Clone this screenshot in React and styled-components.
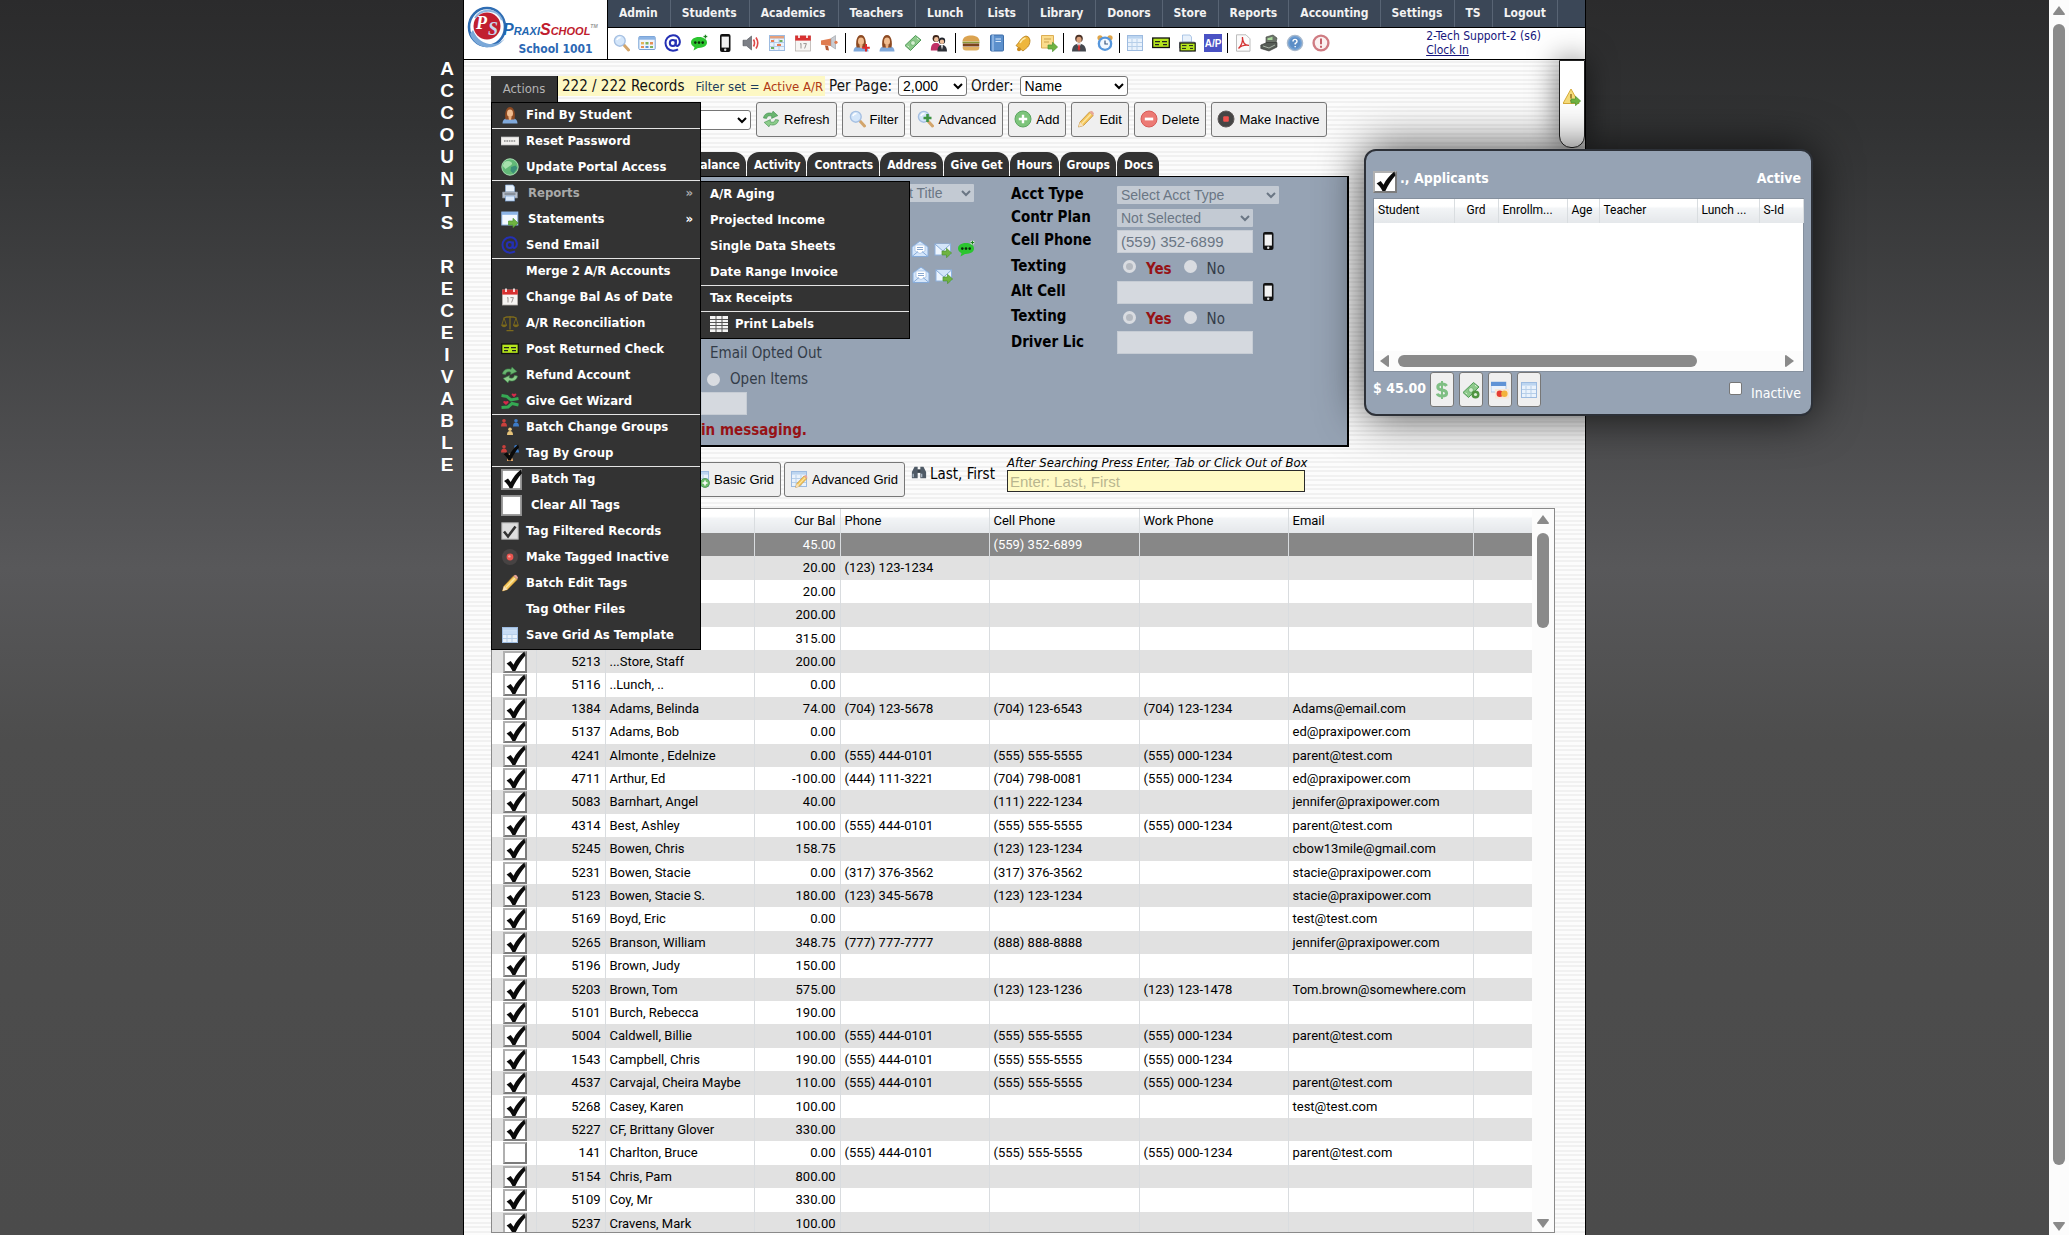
import React from "react";
import styled, { createGlobalStyle, css } from "styled-components";

const uiFont = '"DejaVu Sans Condensed", "DejaVu Sans", sans-serif';
const gridFont = 'Roboto, "DejaVu Sans Condensed", sans-serif';
const controlFont = '"Liberation Sans", Arial, sans-serif';

const GlobalStyle = createGlobalStyle`
  * {
    box-sizing: border-box;
  }
  body {
    margin: 0;
    font-family: ${uiFont};
    background: #4c4c4c;
  }
  ul {
    list-style: none;
    margin: 0;
    padding: 0;
  }
  button, input, select {
    font-family: ${controlFont};
    margin: 0;
  }
`;

/* ---------- icons ---------- */

const Tick = () => (
  <path d="M2.6 10.2 L6 8.2 L8.3 11.2 C10.3 7.2 13.3 3.4 17.2 .4 L18 3.6 C14.8 7.2 12 11.6 9.8 16.4 L7.4 16.4 C6.2 13.8 4.6 11.8 2.6 10.2Z" fill="#0a0a0a" />
);

const Lens = ({ x = 0 }) => (
  <g transform={`translate(${x} 0)`}>
    <path d="M10.5 10.5 L15.5 16" stroke="#d3a56b" strokeWidth="3" strokeLinecap="round" />
    <circle cx="6.8" cy="6.8" r="5.4" fill="#d4e6fa" stroke="#a6c0e2" strokeWidth="1.4" />
    <path d="M3.8 6 Q5 3.6 7.5 3.6" stroke="#fff" strokeWidth="1.5" fill="none" />
  </g>
);

const Sheet = () => (
  <>
    <rect x="1.5" y="1.5" width="15" height="15" fill="#e9f2fc" stroke="#9dbbe0" />
    <rect x="2" y="2" width="14" height="2.6" fill="#bcd5f0" />
    <path d="M2 8.5H16M2 12.5H16M6 5V16M11 5V16" stroke="#b7cfe9" />
  </>
);

const Arrow = ({ x = 8, y = 8 }) => (
  <path transform={`translate(${x} ${y})`} d="M0 3 H4.5 V0.3 L9.6 5 L4.5 9.7 V7 H0Z" fill="#6fb341" stroke="#4f9434" strokeWidth=".7" />
);

const PersonShape = () => (
  <>
    <path d="M1.5 17.5 C1.5 13 5 12 9 12 S16.5 13 16.5 17.5Z" fill="#7fa8da" />
    <path d="M4.6 13.5 C3.4 9 4.4 1 9 1 S14.6 9 13.4 13.5Z" fill="#8d4a22" />
    <ellipse cx="9" cy="7.2" rx="3" ry="3.8" fill="#f1bd90" />
    <path d="M7.4 11 H10.6 L10 14 H8Z" fill="#e9ae80" />
  </>
);

const Bill = () => (
  <>
    <path d="M1 11.5 L11.5 1.5 L17 6 L6.5 16.5Z" fill="#8cc98a" stroke="#4f9a57" />
    <circle cx="9" cy="9" r="2.4" fill="#d5efd0" stroke="#5ba661" strokeWidth=".7" />
    <path d="M3.5 11.7 L5 13.2 M13 4.2 L14.6 5.6" stroke="#e4f5e0" />
  </>
);

const Cheque = () => (
  <>
    <rect x=".7" y="4" width="16.6" height="9.5" fill="#b5e61d" stroke="#111" strokeWidth="1.3" />
    <path d="M3 7.6H8M3 10.6H7M10 7.6H15M11 10.6H15" stroke="#222" strokeWidth="1.1" />
  </>
);

const Recycle = () => (
  <>
    <path d="M1.5 8 C2 4 6 2 10 3.4 L11 1.2 L15.8 5.6 L9.6 8.4 L9.8 6.2 C7 5.2 5 6 4.6 8.4Z" fill="#69b56f" stroke="#3d8c4c" strokeWidth=".6" />
    <path d="M16.5 10 C16 14 12 16 8 14.6 L7 16.8 L2.2 12.4 L8.4 9.6 L8.2 11.8 C11 12.8 13 12 13.4 9.6Z" fill="#8ccc8a" stroke="#3d8c4c" strokeWidth=".6" />
  </>
);

const PrinterShape = () => (
  <>
    <path d="M5 1 H12 L13.5 3 V8 H4.5 V1Z" fill="#e8f1fb" stroke="#8fb2dc" strokeWidth=".7" />
    <path d="M1.5 8 H16.5 V14 H1.5Z" fill="#b8bec8" stroke="#7d8794" strokeWidth=".7" />
    <rect x="4.5" y="12" width="9" height="5" fill="#dbe9fa" stroke="#7fa6d8" strokeWidth=".7" />
    <path d="M3.5 10 H14.5" stroke="#59636f" />
  </>
);

const Pencil = () => (
  <>
    <path d="M1.5 17 L3 12 L12.5 2 L16.2 5.5 L6.5 15.5Z" fill="#f4c55b" stroke="#b98226" strokeWidth=".7" />
    <path d="M12.5 2 L14 .8 Q16 .8 17 3.4 L16.2 5.5Z" fill="#e8a69a" />
    <path d="M1.5 17 L3 12 L6.5 15.5Z" fill="#f7e1bd" />
    <path d="M5 13.5 L14 4" stroke="#fbe6a2" strokeWidth="1.4" />
  </>
);

const Pawn = ({ x, y, color }) => (
  <g transform={`translate(${x} ${y})`} fill={color}>
    <circle cx="3" cy="1.8" r="1.8" />
    <path d="M0 7.5 C0 4.5 1.5 3.6 3 3.6 S6 4.5 6 7.5Z" />
  </g>
);

const CalendarShape = () => (
  <>
    <rect x="1.5" y="2" width="15" height="15" fill="#f7f5f3" stroke="#b9b4b0" strokeWidth=".8" />
    <rect x="1.2" y="1.6" width="15.6" height="5" fill="#d83030" />
    <path d="M5 .5V4M13 .5V4" stroke="#fff" strokeWidth="1.6" />
    <path d="M6 10.2 L7 9.4V14.5 M9.4 9.6H12.4L10.6 14.5" fill="none" stroke="#9a9492" />
  </>
);

const Envelope = () => (
  <>
    <rect x="1" y="4" width="15.5" height="11" fill="#edf5fe" stroke="#8db2e0" />
    <path d="M1 4 L8.8 11 L16.5 4" fill="#d3e5f9" stroke="#86abd9" />
  </>
);

const drawings = {
  search: <Lens x={1} />,
  cards: (
    <>
      <rect x=".8" y="2.5" width="16.4" height="13" rx="1" fill="#eef5fd" stroke="#76a0d4" />
      <rect x="1" y="2.7" width="16" height="3" fill="#8db4e4" />
      <path d="M3 8h3v2.4H3z" fill="#e2b458" />
      <path d="M7.5 8h3v2.4h-3zM12 12h3v2h-3z" fill="#7fb35b" />
      <path d="M12 8h3v2.4h-3zM3 12h3v2H3z" fill="#e58f55" />
      <path d="M7.5 12h3v2h-3z" fill="#5f93d3" />
    </>
  ),
  at: (
    <g fill="none" stroke="#2430b4" strokeWidth="2">
      <circle cx="8.8" cy="9" r="3" />
      <path d="M12 5.5 L11.6 10.4 Q12 12.4 13.8 11.8 C17.5 9.5 16 1.2 9 1.3 C-1 1.8 -1 16.5 9 16.7 Q12 16.7 14 15.4" />
    </g>
  ),
  chat: (
    <>
      <path d="M9 3 C4 3 1 5.4 1 8.6 C1 10.8 2.5 12.4 4.5 13.2 L3.5 16.5 L8 14 C13 14.2 17 12.2 17 8.6 C17 5.4 14 3 9 3Z" fill="#2bc52f" />
      <circle cx="5.3" cy="8.6" r="1.3" fill="#0b2c0b" />
      <circle cx="9" cy="8.6" r="1.3" fill="#0b2c0b" />
      <circle cx="12.7" cy="8.6" r="1.3" fill="#0b2c0b" />
      <circle cx="15.4" cy="2.6" r="2.2" fill="#d8f0d8" />
      <path d="M15.4 .8V4.4M13.6 2.6H17.2" stroke="#157a18" />
    </>
  ),
  phone: (
    <>
      <rect x="4" y="0" width="10.5" height="18" rx="2" fill="#111" />
      <rect x="5.6" y="2.6" width="7.3" height="11" fill="#f2f2f2" />
      <circle cx="9.2" cy="15.8" r="1.2" fill="#ddd" />
    </>
  ),
  speaker: (
    <>
      <path d="M1 6.2 H4.5 L9.5 2 V16 L4.5 11.8 H1Z" fill="#7c7f86" stroke="#4e5157" strokeWidth=".6" />
      <path d="M11.5 5.5 Q13.5 9 11.5 12.5 M14 3.5 Q17.5 9 14 14.5" fill="none" stroke="#dd4646" strokeWidth="1.6" />
    </>
  ),
  schedule: (
    <>
      <Sheet />
      <path d="M3 6h3v2H3zM9 10h4v2H9z" fill="#e77a52" />
      <path d="M11.5 6h3v2h-3zM3 13h3v2H3z" fill="#6cae5f" />
      <rect x="2" y="2" width="14" height="2.4" fill="#e5a07c" />
    </>
  ),
  calendar: <CalendarShape />,
  megaphone: (
    <>
      <path d="M1 6.5 L11 4.5 V12 L1 10.8Z" fill="#e07c50" />
      <path d="M11 4.5 L15.5 1.5 V15 L11 12Z" fill="#c9ccd2" stroke="#8d9097" strokeWidth=".5" />
      <path d="M5 11.5 L8 12 L9 16.5 L6 16Z" fill="#b45a36" />
      <circle cx="16" cy="8.3" r="1.6" fill="#e07c50" />
    </>
  ),
  personAdd: (
    <>
      <PersonShape />
      <path d="M14 10V17.6M10.2 13.8H17.8" stroke="#dd2a2a" strokeWidth="2" />
    </>
  ),
  person: <PersonShape />,
  money: <Bill />,
  couple: (
    <>
      <circle cx="6" cy="4.4" r="3.4" fill="#3c2418" />
      <circle cx="6.3" cy="5.4" r="2.3" fill="#efc09c" />
      <path d="M.8 16.5 C.8 10.5 3 9 6 9 S10.5 10.5 10.5 16.5Z" fill="#c03066" />
      <circle cx="12" cy="6.8" r="3.2" fill="#20242c" />
      <circle cx="12" cy="7.8" r="2.2" fill="#efc09c" />
      <path d="M7.4 17.6 C7.4 12.5 9.5 11 12 11 S17 12.5 17 17.6Z" fill="#2e3138" />
      <path d="M11 11.3h2l-1 4.5z" fill="#fff" />
    </>
  ),
  burger: (
    <>
      <path d="M.5 7.5 C.5 3 5 1.5 9 1.5 S17.5 3 17.5 7.5Z" fill="#dba350" />
      <path d="M.5 8.5 H17.5" stroke="#8a9a3a" strokeWidth="1.6" />
      <rect x=".8" y="9.5" width="16.4" height="3" fill="#7c431c" />
      <path d="M.6 13 H17.4 Q17.4 16.6 14 16.6 H4 Q.6 16.6 .6 13Z" fill="#e0b061" />
    </>
  ),
  book: (
    <>
      <rect x="2.5" y="1" width="13" height="16" rx="1" fill="#5c90cc" stroke="#3d6da8" />
      <path d="M5 1V17" stroke="#9dc1ea" strokeWidth="1.4" />
      <path d="M7.5 5H13M7.5 7.5H13" stroke="#d8e8fa" />
    </>
  ),
  bell: (
    <>
      <path d="M12 2 C6 4 6 8 2 11.5 L9 17 C12 14 16 13 16 6 Q15 2 12 2Z" fill="#eeb63c" stroke="#b27a16" strokeWidth=".8" />
      <path d="M6 9 Q8 5 11.5 4" stroke="#fdeaa8" strokeWidth="1.5" fill="none" />
      <circle cx="5" cy="15.2" r="2" fill="#c98b20" />
    </>
  ),
  noteArrow: (
    <>
      <path d="M1.5 1.5 H13.5 V10 L9.5 14 H1.5Z" fill="#fbdc8c" stroke="#dcae54" />
      <path d="M4 5H11M4 8H9" stroke="#caa04a" />
      <Arrow />
    </>
  ),
  suit: (
    <>
      <circle cx="9" cy="4.6" r="3.8" fill="#4a3126" />
      <ellipse cx="9" cy="5.8" rx="2.6" ry="3" fill="#d9a07c" />
      <path d="M2 17.5 C2 12 5 9.8 9 9.8 S16 12 16 17.5Z" fill="#45484f" />
      <path d="M7 9.8 H11 L9 14Z" fill="#fff" />
      <path d="M8.4 10.5H9.6L10.3 15L9 17L7.7 15Z" fill="#d22c2c" />
    </>
  ),
  clock: (
    <>
      <circle cx="4" cy="3.8" r="2.6" fill="#e0a549" />
      <circle cx="14" cy="3.8" r="2.6" fill="#e0a549" />
      <circle cx="9" cy="9.7" r="7.3" fill="#5596dc" />
      <circle cx="9" cy="9.7" r="5" fill="#f2f8fe" />
      <path d="M9 6.5V10H12" fill="none" stroke="#39577e" strokeWidth="1.2" />
    </>
  ),
  table: <Sheet />,
  cheque: <Cheque />,
  printCheque: (
    <>
      <PrinterShape />
      <rect x="2" y="9" width="15.2" height="8" fill="#b5e61d" stroke="#111" strokeWidth="1.2" />
      <path d="M4 11.6H8.5M4 14.4H8M11 11.6H15M12 14.4H15" stroke="#222" />
    </>
  ),
  payable: (
    <>
      <rect width="18" height="18" fill="#4a52c4" />
      <text x="9" y="12.6" textAnchor="middle" fontFamily="Liberation Sans, sans-serif" fontWeight="700" fontSize="10" fill="#fff">A/P</text>
    </>
  ),
  pdf: (
    <>
      <path d="M2.5 .8 H12 L16 4.8 V17.2 H2.5Z" fill="#fbfbfb" stroke="#bcbcbc" />
      <path d="M4.5 14.5 C8 11 9 7 8.4 3 C8.6 8 11 11.5 15 11.4 C11 10.8 7 11.8 4.5 14.5Z" fill="none" stroke="#d43131" strokeWidth="1.3" />
    </>
  ),
  register: (
    <>
      <path d="M6 3 L13 1 L17 4 L16 9 L6 9Z" fill="#6b7369" stroke="#3f453e" strokeWidth=".6" />
      <path d="M7.5 4.3 L12.5 2.8 V6 H7.5Z" fill="#a8d79b" />
      <path d="M.8 11 L7 8.5 H17 V13 L9 17 L.8 14.5Z" fill="#565c56" stroke="#333" strokeWidth=".6" />
      <path d="M3 12 L9 14 L15 11" stroke="#aab3a8" fill="none" />
    </>
  ),
  help: (
    <>
      <circle cx="9" cy="9" r="7.6" fill="#6f9fd4" stroke="#a9b9cc" strokeWidth="1.4" />
      <circle cx="9" cy="9" r="5.4" fill="#5c8dc6" />
      <path d="M7 7.4 Q7 5.4 9 5.4 T11 7.4 Q11 8.6 9.2 9.4 V10.6 M9.2 12V13.2" stroke="#fff" strokeWidth="1.4" fill="none" />
    </>
  ),
  alert: (
    <>
      <circle cx="9" cy="9" r="7.4" fill="#fbf1f1" stroke="#cf7b82" strokeWidth="2.4" />
      <path d="M9 4.4V10.2M9 11.8V13.8" stroke="#c5616a" strokeWidth="2" />
    </>
  ),
  refresh: <Recycle />,
  advanced: (
    <>
      <Lens x={1} />
      <path d="M11.5 4V12M7.5 8H15.5" stroke="#3e9444" strokeWidth="2.6" />
    </>
  ),
  add: (
    <>
      <circle cx="9" cy="9" r="8" fill="#7cc47a" stroke="#5ca561" />
      <path d="M9 4.8V13.2M4.8 9H13.2" stroke="#fff" strokeWidth="2.4" />
    </>
  ),
  pencil: <Pencil />,
  remove: (
    <>
      <circle cx="9" cy="9" r="8" fill="#ec7a74" stroke="#d75b58" />
      <path d="M4.8 9H13.2" stroke="#fff" strokeWidth="2.8" />
    </>
  ),
  inactive: (
    <>
      <circle cx="9" cy="9" r="8" fill="#454545" stroke="#5f5a5a" />
      <rect x="6.2" y="6.2" width="5.6" height="5.6" rx="1" fill="#f0504c" />
    </>
  ),
  recordDot: (
    <>
      <circle cx="9" cy="9" r="8" fill="#474343" />
      <circle cx="9" cy="9" r="3.4" fill="#e8544e" />
      <circle cx="8.4" cy="8.4" r="1.2" fill="#f8a19b" />
    </>
  ),
  password: (
    <>
      <rect x="0" y="5" width="18" height="8" fill="#f2f0ee" stroke="#bbb" strokeWidth=".7" />
      <path d="M3 9H15" stroke="#8c8c8c" strokeWidth="1.6" strokeDasharray="1.6 .8" />
    </>
  ),
  globe: (
    <>
      <circle cx="9" cy="9" r="8.4" fill="#62b877" />
      <path d="M3 4.5 Q7 2 10 4 T8 8.5 L4.5 11 L1.8 8Z" fill="#a6e0ac" />
      <path d="M10 9 L14.5 7.5 L16.5 10 L12.5 15.5 L9.5 13Z" fill="#3b8f78" />
      <circle cx="9" cy="9" r="8.2" fill="none" stroke="#b8e2be" strokeWidth=".8" />
    </>
  ),
  printer: <PrinterShape />,
  statement: (
    <>
      <rect x=".8" y="2" width="16" height="13" fill="#f4f9ff" stroke="#8db2e0" />
      <rect x="1" y="2" width="15.6" height="2.8" fill="#8cb4e6" />
      <Arrow x={7.5} />
    </>
  ),
  scales: (
    <g fill="none" stroke="#7c6a1c" strokeWidth="1.3">
      <path d="M9 2V15.5M2.5 4 Q9 1.5 15.5 4M5.5 16.6H12.5" />
      <path d="M3 4 L.8 11 H5.4Z M15 4 L12.6 11 H17.2Z" strokeWidth=".9" />
      <path d="M.6 11 Q3 14 5.6 11M12.4 11 Q15 14 17.4 11" fill="#7c6a1c" />
    </g>
  ),
  give: (
    <>
      <path d="M.5 3.5 L6 4.5 L10 8 L17.5 6.5 M.5 15.5 L7 15 L11 11.5 L17.5 13" fill="none" stroke="#35a853" strokeWidth="3" />
      <path d="M13 5.2 L10.6 2.8 Q10.6 .8 13 1.9 Q15.4 .8 15.4 2.8Z M5 13 L2.2 10.4 Q2.2 8.4 5 9.4 Q7.6 8.4 7.6 10.4Z" fill="#d6294a" />
    </>
  ),
  groups: (
    <>
      <Pawn x={0} y={1} color="#c9403c" />
      <Pawn x={12} y={1} color="#3d7bc6" />
      <Pawn x={6} y={9.5} color="#e6c379" />
    </>
  ),
  tagGroups: (
    <>
      <Pawn x={0} y={1} color="#c9403c" />
      <Pawn x={12} y={1} color="#3d7bc6" />
      <Pawn x={6} y={9.5} color="#e6a96a" />
      <Tick />
    </>
  ),
  boxTick: (
    <>
      <rect x=".8" y=".8" width="16.4" height="16.4" fill="#fff" stroke="#8f8f8f" strokeWidth="1.6" />
      <Tick />
    </>
  ),
  boxEmpty: <rect x=".8" y=".8" width="16.4" height="16.4" fill="#fff" stroke="#8f8f8f" strokeWidth="1.6" />,
  boxSoft: (
    <>
      <rect x=".8" y=".8" width="16.4" height="16.4" fill="#dedede" stroke="#a9a9a9" strokeWidth="1" />
      <path d="M3 9.5 L7 14.5 L14.5 4.5" fill="none" stroke="#333" strokeWidth="2.6" />
    </>
  ),
  template: (
    <>
      <Sheet />
      <path d="M2 5H16V8H2Z" fill="#c7dcf5" />
    </>
  ),
  labels: (
    <>
      <rect x="0" y="1" width="18" height="16" fill="#f4f4f4" />
      <path d="M0 4.5H18M0 7.5H18M0 10.5H18M0 13.8H18M6 1V17M12 1V17" stroke="#555" />
    </>
  ),
  mailOpen: (
    <>
      <path d="M1 7 L9 1 L17 7 V16.5 H1Z" fill="#d5e6fa" stroke="#86abd9" />
      <path d="M4 5H14V11L9 13.5L4 11Z" fill="#fff" stroke="#9dbce2" strokeWidth=".7" />
      <path d="M6 7.5H12M6 9.5H12" stroke="#8aa9d0" />
      <path d="M1 16.5 L7 11.5 M17 16.5 L11 11.5" stroke="#86abd9" />
    </>
  ),
  mailSend: (
    <>
      <Envelope />
      <Arrow />
    </>
  ),
  gridAdd: (
    <>
      <Sheet />
      <circle cx="13" cy="13" r="4.5" fill="#6cbb6a" stroke="#3f8a45" strokeWidth=".7" />
      <path d="M13 10.5V15.5M10.5 13H15.5" stroke="#fff" strokeWidth="1.5" />
    </>
  ),
  gridEdit: (
    <>
      <Sheet />
      <g transform="translate(4.5 4.5) scale(.76)">
        <Pencil />
      </g>
    </>
  ),
  binoculars: (
    <>
      <path d="M1 16 V9 L4 3 H7.5 V16Z M10.5 3 H14 L17 9 V16 H10.5Z" fill="#4f5a66" />
      <rect x="7" y="6" width="4" height="4" fill="#39424c" />
      <path d="M2.5 11V15M12 11V15" stroke="#a7b4c2" strokeWidth="1.5" />
    </>
  ),
  dollar: (
    <g fill="none" stroke="#7fbf84">
      <path d="M13.5 5 Q12.5 3 9 3 Q4.8 3 4.8 6 Q4.8 8.4 9 9 Q13.6 9.6 13.6 12.2 Q13.6 15 9 15 Q5 15 4.3 12.6" strokeWidth="3" />
      <path d="M9 0V18" strokeWidth="2" />
    </g>
  ),
  moneyAdd: (
    <>
      <Bill />
      <circle cx="13.5" cy="13.5" r="4" fill="#4f9440" />
      <circle cx="13.5" cy="13.5" r="1.6" fill="#dcefd6" />
    </>
  ),
  card: (
    <>
      <rect x="0" y="1" width="15" height="10" fill="#eaf2fc" stroke="#9ab9e0" strokeWidth=".7" />
      <path d="M0 1H15V5H0Z" fill="#5f93d6" />
      <rect x="4" y="8" width="14" height="9.5" fill="#f7e8d8" />
      <circle cx="8.8" cy="12.8" r="3.2" fill="#e43c34" />
      <circle cx="13.4" cy="12.8" r="3.2" fill="#f3b33c" />
    </>
  ),
  warning: (
    <>
      <path d="M8 1 L16 15.5 H0Z" fill="#f5dc7a" stroke="#d6ab3a" />
      <path d="M8 6V10.5M8 12V13.6" stroke="#8a6a1c" strokeWidth="1.4" />
      <Arrow />
    </>
  ),
};

const Svg = styled.svg`
  display: block;
  flex: none;
  width: ${(props) => props.$size || 18}px;
  height: ${(props) => props.$size || 18}px;
`;

const Icon = ({ name, size }) => (
  <Svg viewBox="0 0 18 18" $size={size} aria-hidden="true">
    {drawings[name]}
  </Svg>
);

/* ---------- frame ---------- */

const Root = styled.div`
  display: flex;
  height: 100vh;
  overflow: hidden;
  background: linear-gradient(#2b2b2c 0%, #313233 10%, #58585a 46%, #4d4d4d 60%, #4b4b4b 100%);
`;

const Gutter = styled.div`
  flex: 1;
  display: flex;
  justify-content: flex-end;
`;

const SideTitle = styled.h1`
  width: 32px;
  margin: 58px 0 0;
  font: bold 19px/22px ${controlFont};
  color: #fff;
  text-align: center;

  span {
    display: block;
    height: 22px;
  }
`;

const Page = styled.div`
  position: relative;
  flex: 0 1 1123px;
  min-width: 0;
  display: flex;
  flex-direction: column;
  border: solid #000;
  border-width: 0 1px;
  background: repeating-linear-gradient(#fcfcfc 0 2px, #f1f1f1 2px 4px, #fcfcfc 4px 7px, #f1f1f1 7px 9px);
`;

const Track = styled.div`
  flex: none;
  display: flex;
  align-items: center;
  justify-content: space-between;
  background: #fcfcfc;
  ${(props) =>
    props.$horizontal
      ? css`
          height: 20px;
          padding: 0 7px 0 5px;
          gap: 7px;
        `
      : css`
          flex-direction: column;
          width: ${props.$width}px;
          padding: 5px 0 3px;
          gap: 7px;
        `}
`;

const Rail = styled.div`
  flex: 1;
  display: flex;
  flex-direction: ${(props) => (props.$horizontal ? "row" : "column")};
`;

const Thumb = styled.div`
  border-radius: 6px;
  background: #8a8a8a;
  ${(props) => (props.$horizontal ? "height" : "width")}: 12px;
`;

const arrowPaths = {
  up: "M6 1 L12 9 Q12 10 11 10 H1 Q0 10 0 9Z",
  down: "M6 11 L12 3 Q12 2 11 2 H1 Q0 2 0 3Z",
  left: "M1 6 L9 0 Q10 0 10 1 V11 Q10 12 9 12Z",
  right: "M10 6 L2 0 Q1 0 1 1 V11 Q1 12 2 12Z",
};

const ScrollArrow = ({ to }) => (
  <svg width="12" height="12" viewBox="0 0 12 12" fill="#8a8a8a" aria-hidden="true">
    <path d={arrowPaths[to]} />
  </svg>
);

const Scroll = ({ horizontal, width, portion }) => (
  <Track $horizontal={horizontal} $width={width}>
    <ScrollArrow to={horizontal ? "left" : "up"} />
    <Rail $horizontal={horizontal}>
      <Thumb $horizontal={horizontal} style={{ flexBasis: `${portion}%` }} />
    </Rail>
    <ScrollArrow to={horizontal ? "right" : "down"} />
  </Track>
);

/* ---------- header ---------- */

const Header = styled.header`
  display: flex;
  flex: none;
  height: 60px;
  border-bottom: 1px solid #000;
  background: #fff;
`;

const Brand = styled.div`
  display: flex;
  width: 144px;
  padding: 6px 3px;
  border-right: 1px solid #000;
`;

const BrandText = styled.div`
  margin: 10px 0 0 -8px;
`;

const Wordmark = styled.div`
  font: italic bold 16px/20px ${controlFont};
  font-variant: small-caps;
  color: #1f66b0;
  white-space: nowrap;

  b {
    color: #c01c2e;
  }
  sup {
    font-size: 5px;
    color: #999;
    vertical-align: 7px;
    font-variant: normal;
  }
`;

const SchoolName = styled.div`
  padding-right: 5px;
  font: bold 12px/18px ${uiFont};
  color: #2c68b4;
  text-align: right;
`;

const HeaderMain = styled.div`
  flex: 1;
`;

const Nav = styled.nav`
  display: flex;
  height: 28px;
  border-bottom: 1px solid #000;
  background: #3b4757;
`;

const NavLink = styled.a`
  padding: 0 11px;
  border-right: 1px solid #586474;
  font: bold 12px/27px ${uiFont};
  color: #f2f2f2;
  text-decoration: none;

  &:nth-child(-n + 7) {
    padding-right: 12px;
  }
`;

const IconBar = styled.div`
  display: flex;
  align-items: center;
  height: 29px;
`;

const IconGroup = styled.div`
  display: flex;
  & + & {
    border-left: 1px solid #000;
    padding-left: 2px;
    margin-left: 1px;
  }
  &:nth-child(2),
  &:nth-child(3) {
    margin-left: 3px;
  }
`;

const ToolButton = styled.button`
  display: flex;
  align-items: center;
  justify-content: center;
  width: 26px;
  height: 20px;
  padding: 0;
  border: none;
  background: none;
`;

const UserInfo = styled.div`
  margin-left: auto;
  padding-right: 44px;
  font: 12px/14px ${uiFont};
  color: #16167c;

  a {
    color: #16167c;
  }
`;

/* ---------- toolbars ---------- */

const RecordRow = styled.div`
  display: flex;
  align-items: center;
  flex: none;
  height: 20px;
  margin: 16px 0 0 94px;
  font-size: 15px;
  color: #111;
`;

const RecordCount = styled.div`
  display: flex;
  align-items: center;
  height: 20px;
  padding: 0 2px 0 4px;
  gap: 11px;
  background: #fdf8c4;
`;

const FilterNote = styled.span`
  font-size: 13px;
  color: #1d3c5c;

  em {
    font-style: normal;
    color: #b03a14;
  }
`;

const Field = styled.label`
  display: flex;
  align-items: center;
  gap: 6px;
  margin-left: 4px;
`;

const Select = styled.select`
  width: ${(props) => props.$width}px;
  height: 20px;
  padding: 0;
  border: 1px solid #767676;
  border-radius: 3px;
  background: #fff;
  color: #000;
  font-size: 14px;
`;

const ButtonRow = styled.div`
  display: flex;
  align-items: center;
  flex: none;
  gap: 5px;
  margin: 6px 0 0 166px;
`;

const PushButton = styled.button`
  display: flex;
  align-items: center;
  gap: 4px;
  height: 35px;
  padding: 0 6px 1px 5px;
  border: 1px solid #777;
  border-radius: 3px;
  background: #efefef;
  color: #000;
  font-size: 13px;
  white-space: nowrap;
`;

const TabRow = styled.div`
  display: flex;
  flex: none;
  gap: 1px;
  margin: 15px 0 0 221px;
`;

const Tab = styled.button`
  height: 24px;
  padding: 0 6px 0 7px;
  border: none;
  border-radius: 12px 12px 0 0;
  background: #333;
  color: #fff;
  font: bold 12px/26px ${uiFont};
`;

/* ---------- account form ---------- */

const Panel = styled.section`
  display: flex;
  flex: none;
  height: 271px;
  margin: 0 236px 0 27px;
  border: 1px solid #000;
  border-width: 1px 2px 2px 1px;
  background: #96a3b4;
`;

const PanelLeft = styled.div`
  display: flex;
  flex-direction: column;
  width: 519px;
  padding: 7px 0 0 209px;
  font-size: 15px;
  color: #333c48;
`;

const TitleRow = styled.div`
  display: flex;
  justify-content: flex-end;
  width: 273px;
`;

const MailIcons = styled.div`
  height: 129px;
  flex: none;
  margin-bottom: 9px;
`;

const MailRow = styled.div`
  display: flex;
  justify-content: flex-end;
  gap: 5px;
  width: 274px;
  height: 26px;
  padding-right: ${(props) => (props.$indent ? 22 : 0)}px;

  &:first-of-type {
    margin-top: 38px;
  }
`;

const PanelSelect = styled(Select)`
  height: 18px;
  border: none;
  border-radius: 1px;
  background: #c3cad3;
  color: #6a7684;

  &:disabled {
    opacity: 1;
  }
`;

const PanelInput = styled.input`
  width: ${(props) => props.$width || 136}px;
  height: 23px;
  padding: 0 3px;
  border: 1px solid #c6ccd4;
  background: #d5d9df;
  color: #6a7684;
  font-size: 15px;
`;

const Radio = styled.input`
  appearance: none;
  width: 13px;
  height: 13px;
  border: 3px solid #d9dce1;
  border-radius: 50%;
  background: ${(props) => (props.defaultChecked ? "#b5bac1" : "#d9dce1")};
`;

const TextLine = styled.div`
  display: flex;
  align-items: center;
  gap: 10px;
  height: 26px;
  padding-left: ${(props) => (props.$pad ? 6 : 9)}px;
`;

const Warning = styled.p`
  margin: 6px 0 0;
  font: bold 15px/18px ${uiFont};
  color: #961216;
`;

const FormGrid = styled.div`
  display: grid;
  grid-template-columns: 106px 1fr;
  grid-template-rows: 23px 23px 24px 27px 24px 26px 25px;
  align-items: center;
  align-content: start;
  padding-top: 6px;
`;

const FormLabel = styled.label`
  padding-bottom: 2px;
  font: bold 15px/20px ${uiFont};
  color: #000;
`;

const FieldCell = styled.div`
  display: flex;
  align-items: center;
  gap: 6px;
`;

const YesNo = styled.div`
  display: flex;
  align-items: center;
  gap: 10px;
  padding-left: 6px;
  font-size: 15px;
  line-height: 20px;
  color: #333c48;

  b {
    color: #961216;
  }
  label {
    padding-top: 4px;
    margin-right: 2px;
  }
`;

/* ---------- search row and grid ---------- */

const SearchRow = styled.div`
  display: flex;
  align-items: flex-start;
  flex: none;
  height: 46px;
  margin: 15px 0 0 222px;
  gap: 3px;
`;

const NameMode = styled.div`
  display: flex;
  gap: 3px;
  margin: 2px 9px 0 3px;
  font-size: 15px;
  line-height: 20px;
`;

const SearchLabel = styled.label`
  display: block;
  width: 298px;
  margin-top: -6px;
  font: italic 13px/14px ${uiFont};
  color: #000;
  white-space: nowrap;
`;

const SearchInput = styled.input`
  display: block;
  width: 298px;
  height: 22px;
  padding: 0 2px;
  border: 1px solid #2a2a2a;
  background: #fffac4;
  font-size: 15px;

  &::placeholder {
    color: #b9b68f;
  }
`;

const GridBox = styled.div`
  display: flex;
  flex: 1;
  min-height: 0;
  margin: 0 30px 2px 27px;
  border: 1px solid #8a8a8a;
  background: #fff;
`;

const GridClip = styled.div`
  flex: 1;
  min-width: 0;
  overflow: hidden;
`;

const Table = styled.table`
  width: 100%;
  table-layout: fixed;
  border-collapse: collapse;
  font-family: ${gridFont};
  font-size: 13px;
  color: #000;

  th {
    height: 24px;
    padding: 0 4px 2px;
    border-right: 1px solid #d9dde0;
    background: linear-gradient(#fff 0 30%, #f2f4f6 40%, #e4e7ea 100%);
    font-weight: normal;
    text-align: left;
    white-space: nowrap;
  }
  td {
    height: 23px;
    padding: 0 4px;
    border-right: 1px solid #d9dcdf;
    line-height: 20px;
    white-space: nowrap;
  }
  tr:nth-child(5n + 2) td,
  tr:nth-child(5n + 4) td {
    height: 24px;
  }
`;

const Row = styled.tr`
  background: ${(props) => (props.$selected ? "#878787" : props.$shaded ? "#e1e1e1" : "#fff")};
  color: ${(props) => (props.$selected ? "#fff" : "#000")};
`;

const Num = styled.td`
  text-align: right;
`;

const NumHead = styled.th`
  && {
    text-align: ${(props) => (props.$center ? "center" : "right")};
  }
`;

const TagBox = styled.label`
  position: relative;
  display: block;
  width: 24px;
  height: 22px;
  margin-left: ${(props) => (props.$indent ? 7 : 0)}px;

  input {
    appearance: none;
    display: block;
    width: 24px;
    height: 22px;
    border: 2px solid;
    border-color: #b0b0b0 #7c7c7c #7c7c7c #b0b0b0;
    background: #fff;
  }
  svg {
    position: absolute;
    inset: 0;
    width: 24px;
    height: 22px;
    pointer-events: none;
  }
`;

const Tag = ({ name, checked, indent }) => (
  <TagBox $indent={indent}>
    <input type="checkbox" aria-label={`Tag ${name}`} defaultChecked={checked} />
    {checked && (
      <svg viewBox="0 0 19 18" aria-hidden="true">
        <Tick />
      </svg>
    )}
  </TagBox>
);

/* ---------- menus ---------- */

const ActionsTab = styled.button`
  position: absolute;
  left: 27px;
  top: 76px;
  width: 67px;
  height: 27px;
  padding: 0 0 2px;
  border: none;
  border-right: 1px solid #000;
  background: #333;
  color: #b4b4b4;
  font: 13px/24px ${uiFont};
`;

const Menu = styled.ul`
  position: absolute;
  left: ${(props) => props.$left}px;
  top: ${(props) => props.$top}px;
  z-index: 2;
  width: 210px;
  border: 1px solid #000;
  background: #333;
`;

const MenuItem = styled.li`
  height: 26px;
  border-bottom: ${(props) => (props.$line ? "1px solid #e4e4e4" : "none")};
`;

const MenuButton = styled.button`
  display: flex;
  align-items: center;
  gap: ${(props) => (props.$wide ? 9 : 7)}px;
  width: 100%;
  height: 25px;
  padding: 0 7px 1px 9px;
  border: none;
  background: none;
  color: ${(props) => (props.$dim ? "#a9a9a9" : "#fff")};
  font: bold 13px/20px ${uiFont};
  text-align: left;
  white-space: nowrap;

  span {
    margin-left: auto;
  }
`;

const IconSpace = styled.i`
  width: 18px;
`;

/* ---------- side tab and applicants window ---------- */

const SideTab = styled.button`
  position: absolute;
  right: 0;
  top: 60px;
  width: 26px;
  height: 88px;
  padding: 0 0 14px 3px;
  border: 1px solid #222;
  border-radius: 0 0 12px 12px;
  background: #fff;
  box-shadow: 0 0 30px rgba(0, 0, 0, 0.6);
`;

const Applicants = styled.section`
  position: absolute;
  left: 900px;
  top: 149px;
  z-index: 3;
  width: 449px;
  height: 267px;
  padding: 19px 7px 0;
  border: 2px solid #2d3138;
  border-radius: 12px;
  background: #96a3b4;
  box-shadow: 0 0 45px rgba(0, 0, 0, 0.75);
`;

const WindowHead = styled.div`
  display: flex;
  align-items: center;
  gap: 3px;
  height: 28px;
  padding-bottom: 4px;
  font: bold 14px/20px ${uiFont};
  color: #fff;

  strong {
    margin: 0 0 8px;
  }
  strong:last-child {
    margin-left: auto;
    padding-right: 3px;
  }
`;

const WindowGrid = styled.div`
  display: flex;
  flex-direction: column;
  justify-content: space-between;
  height: 174px;
  border: 1px solid #85909e;
  background: #fff;
`;

const SmallTable = styled(Table)`
  font-size: 12px;
`;

const WindowFoot = styled.div`
  display: flex;
  gap: 5px;
  height: 35px;
  color: #fff;

  strong {
    margin-right: -1px;
    font: bold 14px/32px ${uiFont};
  }
`;

const FootButton = styled.button`
  display: flex;
  align-items: center;
  justify-content: center;
  width: 24px;
  height: 35px;
  padding: 0;
  border: 1px solid #777;
  border-radius: 3px;
  background: #efefef;
`;

const InactiveLabel = styled.label`
  display: flex;
  gap: 9px;
  margin-left: auto;
  padding: 10px 3px 0 0;
  font-size: 14px;
  line-height: 22px;

  input {
    appearance: none;
    width: 13px;
    height: 13px;
    border: 1px solid #777;
    border-radius: 2px;
    background: #fff;
  }
`;

/* ---------- data ---------- */

const navItems = [
  "Admin", "Students", "Academics", "Teachers", "Lunch", "Lists", "Library",
  "Donors", "Store", "Reports", "Accounting", "Settings", "TS", "Logout",
];

const iconGroups = [
  ["search", "cards", "at", "chat", "phone", "speaker", "schedule", "calendar", "megaphone"],
  ["personAdd", "person", "money", "couple"],
  ["burger", "book", "bell", "noteArrow"],
  ["suit", "clock"],
  ["table", "cheque", "printCheque", "payable"],
  ["pdf", "register", "help", "alert"],
];

const actions = [
  ["refresh", "Refresh"],
  ["search", "Filter"],
  ["advanced", "Advanced"],
  ["add", "Add"],
  ["pencil", "Edit"],
  ["remove", "Delete"],
  ["inactive", "Make Inactive"],
];

const tabs = ["Balance", "Activity", "Contracts", "Address", "Give Get", "Hours", "Groups", "Docs"];

const menuItems = [
  { icon: "person", text: "Find By Student", line: true },
  { icon: "password", text: "Reset Password" },
  { icon: "globe", text: "Update Portal Access", line: true },
  { icon: "printer", text: "Reports", sub: true, dim: true },
  { icon: "statement", text: "Statements", sub: true },
  { icon: "at", text: "Send Email", line: true },
  { text: "Merge 2 A/R Accounts" },
  { icon: "calendar", text: "Change Bal As of Date" },
  { icon: "scales", text: "A/R Reconciliation" },
  { icon: "cheque", text: "Post Returned Check" },
  { icon: "refresh", text: "Refund Account" },
  { icon: "give", text: "Give Get Wizard", line: true },
  { icon: "groups", text: "Batch Change Groups" },
  { icon: "tagGroups", text: "Tag By Group", line: true },
  { icon: "boxTick", text: "Batch Tag", size: 21 },
  { icon: "boxEmpty", text: "Clear All Tags", size: 21 },
  { icon: "boxSoft", text: "Tag Filtered Records" },
  { icon: "recordDot", text: "Make Tagged Inactive" },
  { icon: "pencil", text: "Batch Edit Tags" },
  { text: "Tag Other Files" },
  { icon: "template", text: "Save Grid As Template" },
];

const reportItems = [
  { text: "A/R Aging" },
  { text: "Projected Income" },
  { text: "Single Data Sheets" },
  { text: "Date Range Invoice", line: true },
  { text: "Tax Receipts", line: true },
  { icon: "labels", text: "Print Labels" },
];

// id, name, balance, phone, cell, work, email
const accounts = [
  ["", "", "45.00", "", "(559) 352-6899", "", ""],
  ["", "", "20.00", "(123) 123-1234", "", "", ""],
  ["", "", "20.00", "", "", "", ""],
  ["", "", "200.00", "", "", "", ""],
  ["", "", "315.00", "", "", "", ""],
  ["5213", "...Store, Staff", "200.00", "", "", "", ""],
  ["5116", "..Lunch, ..", "0.00", "", "", "", ""],
  ["1384", "Adams, Belinda", "74.00", "(704) 123-5678", "(704) 123-6543", "(704) 123-1234", "Adams@email.com"],
  ["5137", "Adams, Bob", "0.00", "", "", "", "ed@praxipower.com"],
  ["4241", "Almonte , Edelnize", "0.00", "(555) 444-0101", "(555) 555-5555", "(555) 000-1234", "parent@test.com"],
  ["4711", "Arthur, Ed", "-100.00", "(444) 111-3221", "(704) 798-0081", "(555) 000-1234", "ed@praxipower.com"],
  ["5083", "Barnhart, Angel", "40.00", "", "(111) 222-1234", "", "jennifer@praxipower.com"],
  ["4314", "Best, Ashley", "100.00", "(555) 444-0101", "(555) 555-5555", "(555) 000-1234", "parent@test.com"],
  ["5245", "Bowen, Chris", "158.75", "", "(123) 123-1234", "", "cbow13mile@gmail.com"],
  ["5231", "Bowen, Stacie", "0.00", "(317) 376-3562", "(317) 376-3562", "", "stacie@praxipower.com"],
  ["5123", "Bowen, Stacie S.", "180.00", "(123) 345-5678", "(123) 123-1234", "", "stacie@praxipower.com"],
  ["5169", "Boyd, Eric", "0.00", "", "", "", "test@test.com"],
  ["5265", "Branson, William", "348.75", "(777) 777-7777", "(888) 888-8888", "", "jennifer@praxipower.com"],
  ["5196", "Brown, Judy", "150.00", "", "", "", ""],
  ["5203", "Brown, Tom", "575.00", "", "(123) 123-1236", "(123) 123-1478", "Tom.brown@somewhere.com"],
  ["5101", "Burch, Rebecca", "190.00", "", "", "", ""],
  ["5004", "Caldwell, Billie", "100.00", "(555) 444-0101", "(555) 555-5555", "(555) 000-1234", "parent@test.com"],
  ["1543", "Campbell, Chris", "190.00", "(555) 444-0101", "(555) 555-5555", "(555) 000-1234", ""],
  ["4537", "Carvajal, Cheira Maybe", "110.00", "(555) 444-0101", "(555) 555-5555", "(555) 000-1234", "parent@test.com"],
  ["5268", "Casey, Karen", "100.00", "", "", "", "test@test.com"],
  ["5227", "CF, Brittany Glover", "330.00", "", "", "", ""],
  ["141", "Charlton, Bruce", "0.00", "(555) 444-0101", "(555) 555-5555", "(555) 000-1234", "parent@test.com"],
  ["5154", "Chris, Pam", "800.00", "", "", "", ""],
  ["5109", "Coy, Mr", "330.00", "", "", "", ""],
  ["5237", "Cravens, Mark", "100.00", "", "", "", ""],
];

const gridWidths = [44, 69, 149, 86, 149, 150, 149, 185, 59];
const applicantColumns = [
  ["Student", 80], ["Grd", 44], ["Enrollm...", 69], ["Age", 32], ["Teacher", 98], ["Lunch ...", 62], ["S-Id", 44],
];

/* ---------- pieces ---------- */

const MenuList = ({ items, left, top }) => (
  <Menu $left={left} $top={top}>
    {items.map((item) => (
      <MenuItem key={item.text} $line={item.line}>
        <MenuButton type="button" $dim={item.dim} $wide={item.sub || item.size}>
          {item.icon && <Icon name={item.icon} size={item.size} />}
          {!item.icon && items === menuItems && <IconSpace />}
          {item.text}
          {item.sub && <span>»</span>}
        </MenuButton>
      </MenuItem>
    ))}
  </Menu>
);

const Logo = () => (
  <svg width="44" height="44" viewBox="0 0 44 44" aria-hidden="true">
    <ellipse cx="20" cy="21" rx="18" ry="19" fill="#fff" stroke="#2f6db3" strokeWidth="2.6" />
    <path d="M3 28 C8 44 30 46 38 32 C30 42 12 40 6 24Z" fill="#7aa8d8" />
    <path d="M8 12 C14 2 30 2 35 14" fill="none" stroke="#8db6e0" strokeWidth="2" />
    <circle cx="20" cy="20" r="13.5" fill="#c11f30" />
    <text x="9" y="23" fontFamily="Liberation Serif, serif" fontStyle="italic" fontWeight="700" fontSize="18" fill="#fff">P</text>
    <text x="21" y="29" fontFamily="Liberation Serif, serif" fontStyle="italic" fontWeight="700" fontSize="18" fill="#c8d8ee">S</text>
  </svg>
);

const Texting = ({ name }) => (
  <YesNo>
    <Radio type="radio" id={`${name}-yes`} name={name} defaultChecked disabled />
    <label htmlFor={`${name}-yes`}>
      <b>Yes</b>
    </label>
    <Radio type="radio" id={`${name}-no`} name={name} disabled />
    <label htmlFor={`${name}-no`}>No</label>
  </YesNo>
);

const AccountPanel = () => (
  <Panel>
    <PanelLeft>
      <TitleRow>
        <PanelSelect $width={104} aria-label="Title" disabled>
          <option>Select Title</option>
        </PanelSelect>
      </TitleRow>
      <MailIcons>
        <MailRow>
          <Icon name="mailOpen" />
          <Icon name="mailSend" />
          <Icon name="chat" />
        </MailRow>
        <MailRow $indent>
          <Icon name="mailOpen" />
          <Icon name="mailSend" />
        </MailRow>
      </MailIcons>
      <TextLine>Email Opted Out</TextLine>
      <TextLine $pad>
        <Radio type="radio" id="open-items" name="items" disabled />
        <label htmlFor="open-items">Open Items</label>
      </TextLine>
      <PanelInput $width={46} aria-label="Account value" disabled />
      <Warning>in messaging.</Warning>
    </PanelLeft>
    <FormGrid>
      <FormLabel htmlFor="acct-type">Acct Type</FormLabel>
      <PanelSelect id="acct-type" $width={162} disabled>
        <option>Select Acct Type</option>
      </PanelSelect>
      <FormLabel htmlFor="contr-plan">Contr Plan</FormLabel>
      <PanelSelect id="contr-plan" $width={136} disabled>
        <option>Not Selected</option>
      </PanelSelect>
      <FormLabel htmlFor="cell-phone">Cell Phone</FormLabel>
      <FieldCell>
        <PanelInput id="cell-phone" defaultValue="(559) 352-6899" disabled />
        <Icon name="phone" />
      </FieldCell>
      <FormLabel as="span">Texting</FormLabel>
      <Texting name="cell-texting" />
      <FormLabel htmlFor="alt-cell">Alt Cell</FormLabel>
      <FieldCell>
        <PanelInput id="alt-cell" disabled />
        <Icon name="phone" />
      </FieldCell>
      <FormLabel as="span">Texting</FormLabel>
      <Texting name="alt-texting" />
      <FormLabel htmlFor="driver-lic">Driver Lic</FormLabel>
      <PanelInput id="driver-lic" disabled />
    </FormGrid>
  </Panel>
);

const AccountGrid = () => (
  <GridBox>
    <GridClip>
      <Table>
        <colgroup>
          {gridWidths.map((width, i) => (
            <col key={i} style={{ width }} />
          ))}
        </colgroup>
        <thead>
          <tr>
            <th />
            <th />
            <th />
            <NumHead>Cur Bal</NumHead>
            <th>Phone</th>
            <th>Cell Phone</th>
            <th>Work Phone</th>
            <th>Email</th>
            <th />
          </tr>
        </thead>
        <tbody>
          {accounts.map(([id, name, balance, phone, cell, work, email], i) => (
            <Row key={i} $selected={i === 0} $shaded={i % 2 === 1}>
              <td>
                <Tag name={name} checked={id !== "141"} indent />
              </td>
              <Num>{id}</Num>
              <td>{name}</td>
              <Num>{balance}</Num>
              <td>{phone}</td>
              <td>{cell}</td>
              <td>{work}</td>
              <td>{email}</td>
              <td />
            </Row>
          ))}
        </tbody>
      </Table>
    </GridClip>
    <Scroll width={22} portion={14} />
  </GridBox>
);

const ApplicantsWindow = () => (
  <Applicants>
    <WindowHead>
      <Tag name="Applicants" checked />
      <strong>., Applicants</strong>
      <strong>Active</strong>
    </WindowHead>
    <WindowGrid>
      <SmallTable>
        <colgroup>
          {applicantColumns.map(([text, width]) => (
            <col key={text} style={{ width }} />
          ))}
        </colgroup>
        <thead>
          <tr>
            {applicantColumns.map(([text]) =>
              text === "Grd" ? (
                <NumHead key={text} $center>
                  {text}
                </NumHead>
              ) : (
                <th key={text}>{text}</th>
              )
            )}
          </tr>
        </thead>
      </SmallTable>
      <Scroll horizontal portion={79} />
    </WindowGrid>
    <WindowFoot>
      <strong>$ 45.00</strong>
      {["dollar", "moneyAdd", "card", "table"].map((name) => (
        <FootButton key={name} type="button" aria-label={name}>
          <Icon name={name} />
        </FootButton>
      ))}
      <InactiveLabel>
        <input type="checkbox" />
        Inactive
      </InactiveLabel>
    </WindowFoot>
  </Applicants>
);

const App = () => (
  <>
    <GlobalStyle />
    <Root>
      <Gutter>
        <SideTitle aria-label="Accounts Receivable">
          {"ACCOUNTS RECEIVABLE".split("").map((letter, i) => (
            <span key={i}>{letter}</span>
          ))}
        </SideTitle>
      </Gutter>
      <Page>
        <Header>
          <Brand>
            <Logo />
            <BrandText>
              <Wordmark>
                Praxi<b>School</b>
                <sup>TM</sup>
              </Wordmark>
              <SchoolName>School 1001</SchoolName>
            </BrandText>
          </Brand>
          <HeaderMain>
            <Nav>
              {navItems.map((item) => (
                <NavLink key={item} href="#">
                  {item}
                </NavLink>
              ))}
            </Nav>
            <IconBar>
              {iconGroups.map((group) => (
                <IconGroup key={group[0]}>
                  {group.map((name) => (
                    <ToolButton key={name} type="button" aria-label={name}>
                      <Icon name={name} />
                    </ToolButton>
                  ))}
                </IconGroup>
              ))}
              <UserInfo>
                2-Tech Support-2 (s6)
                <br />
                <a href="#">Clock In</a>
              </UserInfo>
            </IconBar>
          </HeaderMain>
        </Header>

        <RecordRow>
          <RecordCount>
            222 / 222 Records
            <FilterNote>
              Filter set = <em>Active A/R</em>
            </FilterNote>
          </RecordCount>
          <Field>
            Per Page:
            <Select $width={69}>
              <option>2,000</option>
            </Select>
          </Field>
          <Field>
            Order:
            <Select $width={108}>
              <option>Name</option>
            </Select>
          </Field>
        </RecordRow>

        <ButtonRow>
          <Select $width={121} aria-label="Search field" />
          {actions.map(([icon, text]) => (
            <PushButton key={text} type="button">
              <Icon name={icon} />
              {text}
            </PushButton>
          ))}
        </ButtonRow>

        <TabRow>
          {tabs.map((tab) => (
            <Tab key={tab} type="button">
              {tab}
            </Tab>
          ))}
        </TabRow>

        <AccountPanel />

        <SearchRow>
          <PushButton type="button">
            <Icon name="gridAdd" />
            Basic Grid
          </PushButton>
          <PushButton type="button">
            <Icon name="gridEdit" />
            Advanced Grid
          </PushButton>
          <NameMode>
            <Icon name="binoculars" size={16} />
            Last, First
          </NameMode>
          <SearchLabel>
            After Searching Press Enter, Tab or Click Out of Box
            <SearchInput type="text" placeholder="Enter: Last, First" />
          </SearchLabel>
        </SearchRow>

        <AccountGrid />

        <ActionsTab type="button">Actions</ActionsTab>
        <MenuList items={menuItems} left={27} top={102} />
        <MenuList items={reportItems} left={236} top={181} />
        <SideTab type="button" aria-label="Alerts">
          <Icon name="warning" />
        </SideTab>
        <ApplicantsWindow />
      </Page>
      <Gutter />
      <Scroll width={20} portion={96} />
    </Root>
  </>
);

export default App;
